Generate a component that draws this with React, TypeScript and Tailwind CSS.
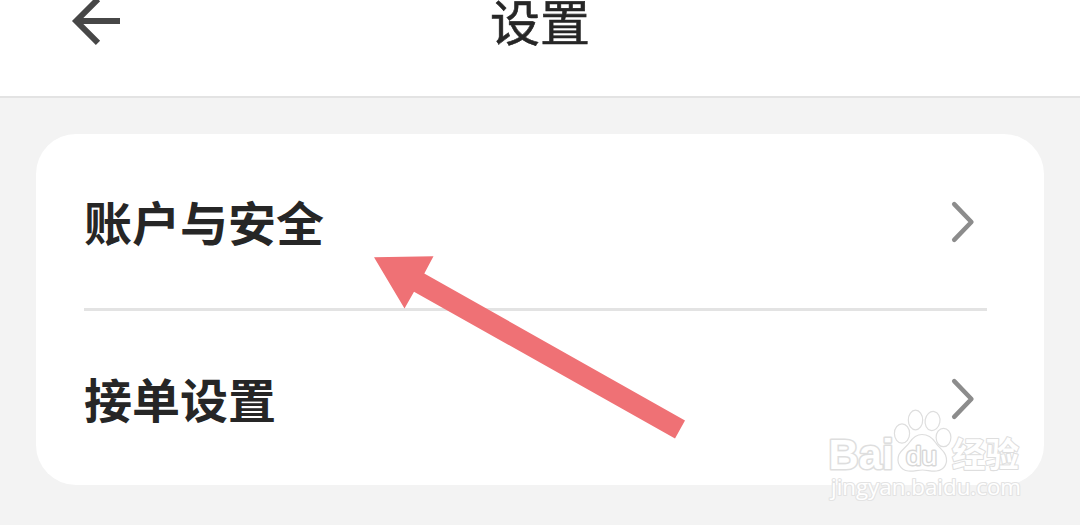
const ROWS = [
  { id: 'account', label: '账户与安全' },
  { id: 'orders', label: '接单设置' },
] as const

function BackIcon() {
  return (
    <svg
      className="ml-[72px] h-12 w-12 shrink-0 overflow-visible"
      viewBox="0 0 48 48"
      fill="none"
      aria-hidden="true"
    >
      <path d="M26 2.200 4.200 24 26 45.800M5 24h43" stroke="#474747" strokeWidth="6" />
    </svg>
  )
}

function ChevronIcon() {
  return (
    <svg className="mt-0.5 h-11 w-6 shrink-0" viewBox="0 0 24 44" fill="none" aria-hidden="true">
      <path
        d="M3.200 4.100 20.400 22 3.200 39.900"
        stroke="#8c8c8c"
        strokeWidth="4.500"
        strokeLinecap="round"
        strokeLinejoin="round"
      />
    </svg>
  )
}

function PointerArrow() {
  return (
    <svg
      className="pointer-events-none absolute left-[370px] top-[250px] h-[194px] w-[320px]"
      viewBox="370 250 320 194"
      aria-hidden="true"
    >
      <path d="M374 257.2 433.5 256.3 424.3 273.5 685 420.5 675 438.5 414 291.7 404.5 308.5z" fill="#ef7175" />
    </svg>
  )
}

function Watermark() {
  return (
    <svg
      className="pointer-events-none absolute left-[820px] top-[400px] h-[110px] w-[210px]"
      viewBox="820 400 210 110"
      fill="#fff"
      stroke="#dedede"
      strokeWidth="1.2"
      strokeLinejoin="round"
    >
      <text
        className="font-['Liberation_Sans',sans-serif]"
        x="828.5"
        y="468.5"
        fontSize="42"
        fontWeight="700"
        textLength="65"
        lengthAdjust="spacingAndGlyphs"
        strokeWidth="3.2"
        paintOrder="stroke"
      >
        Bai
      </text>
      <ellipse cx="902" cy="433.5" rx="7.6" ry="9.6" />
      <ellipse cx="915.5" cy="420" rx="7.2" ry="9.8" />
      <ellipse cx="932.5" cy="421" rx="7.4" ry="9.6" transform="rotate(10 932.5 421)" />
      <ellipse cx="943.5" cy="437.5" rx="7.4" ry="9.2" />
      <path d="M922 434.5c-6 0-9.5 3.5-12.5 8-3 4.500-8 7-10.500 12-3 7.500 1 15.500 9.500 16.500 5 .5 9-1 14-1s8.500 1.500 14 1c8-1 12-8 9-16-2-5-7-7.500-10-12.500-3-4.500-6.500-8-13.500-8z" />
      <text
        className="font-['Liberation_Sans',sans-serif]"
        x="906"
        y="465"
        fontSize="26"
        stroke="#d8d8d8"
        strokeWidth="2.8"
        paintOrder="stroke"
        textLength="31"
        lengthAdjust="spacingAndGlyphs"
      >
        du
      </text>
      <g paintOrder="stroke" strokeWidth="2.2">
        <text
          className="font-['Noto_Sans_CJK_SC',sans-serif]"
          x="952"
          y="467"
          fontSize="34"
          fontWeight="700"
          textLength="67"
          lengthAdjust="spacingAndGlyphs"
        >
          经验
        </text>
        <text
          className="font-['Open_Sans',sans-serif]"
          x="831"
          y="495"
          fontSize="22"
          stroke="#e3e3e3"
          textLength="190"
          lengthAdjust="spacingAndGlyphs"
        >
          jingyan.baidu.com
        </text>
      </g>
    </svg>
  )
}

export default function App() {
  return (
    <div className="relative flex h-[525px] w-[1080px] flex-col overflow-hidden bg-[#f3f3f3] font-['Noto_Sans_CJK_SC',sans-serif] text-[#262626]">
      <header className="grid h-[98px] shrink-0 grid-cols-3 items-start border-b-2 border-[#e3e3e3] bg-white">
        <div className="-mt-[3px]">
          <BackIcon />
        </div>
        <h1 className="-mt-[5px] origin-center scale-y-[0.97] text-center text-[50px] leading-[50px] [-webkit-text-stroke:0.6px_#262626]">
          设置
        </h1>
      </header>

      <main className="px-9 pt-9">
        <ul className="rounded-[40px] bg-white pl-12 pr-[57px]">
          {ROWS.map(({ id, label }) => (
            <li key={id} className="border-b-[3px] border-[#e3e3e3] last:border-b-0">
              <button type="button" className="flex h-[174px] w-full items-center justify-between pr-3">
                <span className="mb-[2px] scale-y-[0.98] text-[48px] font-bold leading-[60px]">{label}</span>
                <ChevronIcon />
              </button>
            </li>
          ))}
        </ul>
      </main>

      <PointerArrow />
      <Watermark />
    </div>
  )
}
